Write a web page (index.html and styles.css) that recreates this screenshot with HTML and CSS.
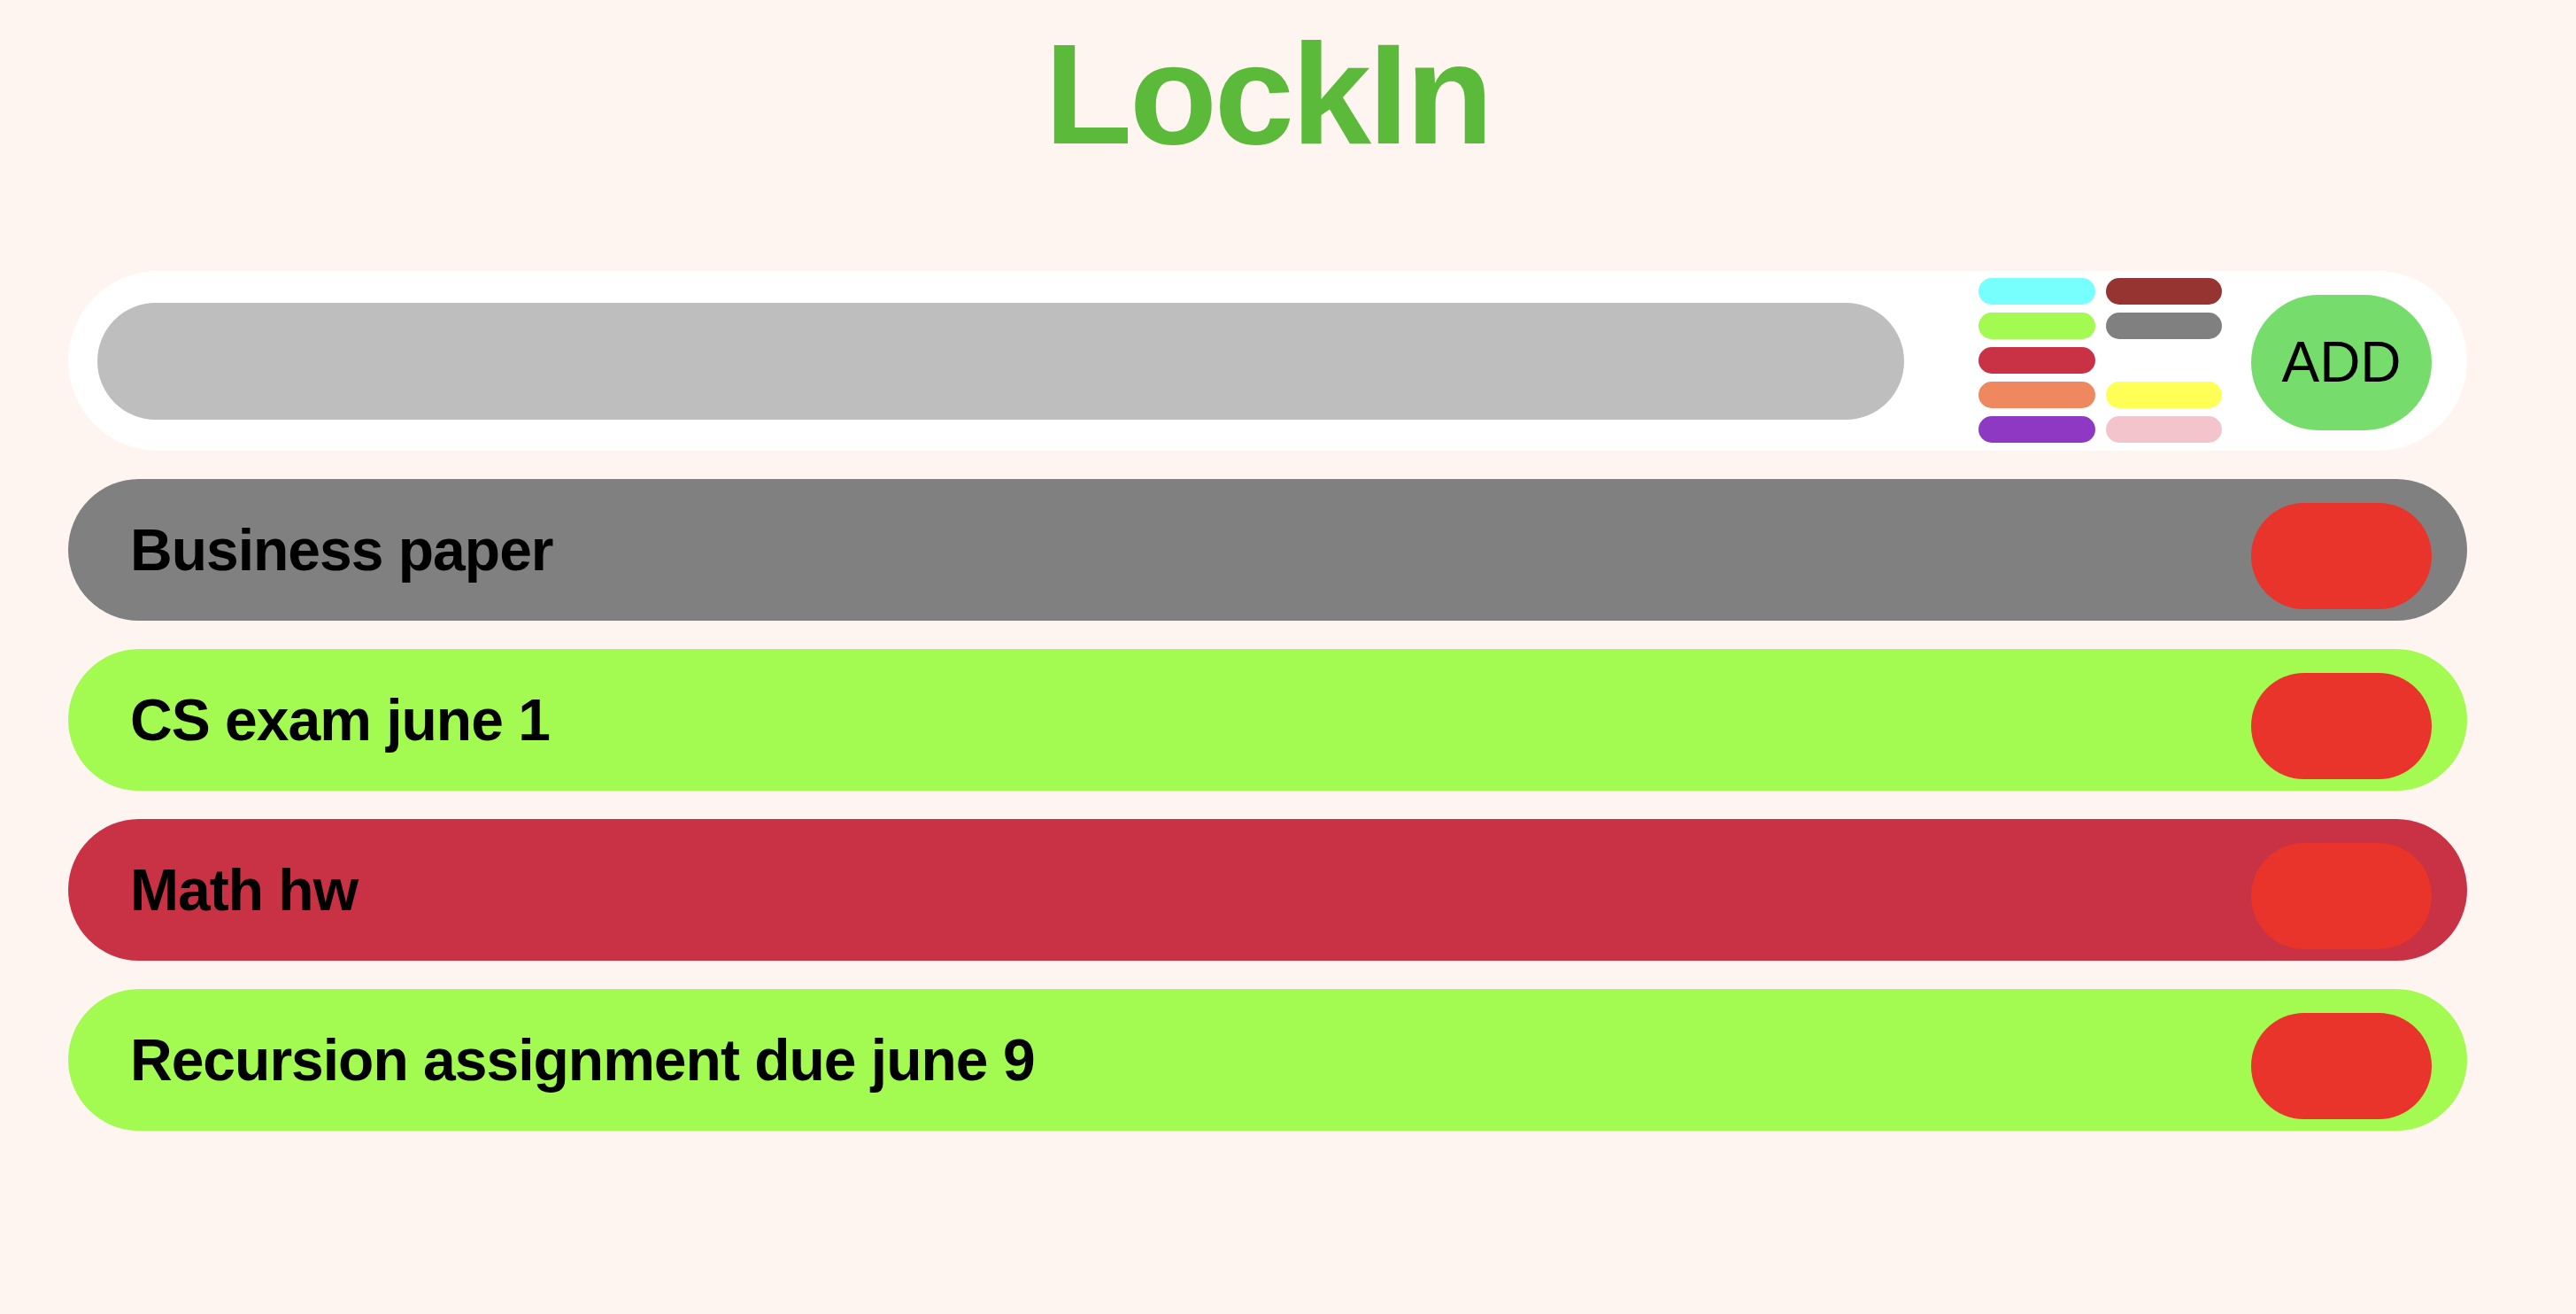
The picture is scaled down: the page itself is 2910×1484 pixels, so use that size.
FILE: index.html
```html
<!DOCTYPE html>
<html>
<head>
<meta charset="utf-8">
<title>LockIn</title>
<link rel="stylesheet" href="styles.css">
</head>
<body>
<div class="app">
  <h1 class="title">LockIn</h1>
  <div class="composer">
    <div class="task-input"></div>
    <div class="palette">
      <span class="swatch c-cyan"></span>
      <span class="swatch c-brown"></span>
      <span class="swatch c-lime"></span>
      <span class="swatch c-gray"></span>
      <span class="swatch c-crimson"></span>
      <span class="swatch c-white"></span>
      <span class="swatch c-orange"></span>
      <span class="swatch c-yellow"></span>
      <span class="swatch c-purple"></span>
      <span class="swatch c-pink"></span>
    </div>
    <button class="add-btn">ADD</button>
  </div>
  <ul class="tasks">
    <li class="task c-gray"><span class="task-text">Business paper</span><button class="del-btn"></button></li>
    <li class="task c-lime"><span class="task-text">CS exam june 1</span><button class="del-btn"></button></li>
    <li class="task c-crimson"><span class="task-text">Math hw</span><button class="del-btn"></button></li>
    <li class="task c-lime"><span class="task-text">Recursion assignment due june 9</span><button class="del-btn"></button></li>
  </ul>
</div>
</body>
</html>
```

FILE: styles.css
```css
html, body {
  margin: 0;
  padding: 0;
  background: #fef5f0;
  font-family: "Liberation Sans", Arial, Helvetica, sans-serif;
}

.app {
  width: 2710px;
  margin-left: 77px;
}

.title {
  margin: 0 0 119px 0;
  padding-top: 25px;
  font-size: 162px;
  line-height: 162px;
  font-weight: bold;
  letter-spacing: -3px;
  color: #5bba3a;
  text-align: center;
}

.composer {
  display: flex;
  align-items: center;
  height: 203px;
  background: #ffffff;
  border-radius: 102px;
  padding-left: 33px;
  padding-right: 40px;
  box-sizing: border-box;
  margin-bottom: 32px;
}

.task-input {
  width: 2041px;
  height: 132px;
  background: #bebebe;
  border-radius: 66px;
  flex-shrink: 0;
}

.palette {
  display: grid;
  grid-template-columns: 132px 131px;
  grid-auto-rows: 30px;
  column-gap: 12px;
  row-gap: 9px;
  margin-left: 84px;
  margin-top: -1px;
}

.swatch {
  display: block;
  border-radius: 15px;
}

.add-btn {
  width: 204px;
  height: 153px;
  margin-left: 33px;
  border: none;
  border-radius: 77px;
  background: #76dd6d;
  color: #000;
  font-family: "Liberation Sans", Arial, Helvetica, sans-serif;
  font-size: 64px;
  padding: 0;
  margin-top: 3px;
}

.tasks {
  list-style: none;
  margin: 0;
  padding: 0;
  display: flex;
  flex-direction: column;
  gap: 32px;
}

.task {
  display: flex;
  align-items: center;
  justify-content: space-between;
  height: 160px;
  border-radius: 80px;
  padding-left: 70px;
  padding-right: 40px;
  box-sizing: border-box;
}

.task-text {
  font-size: 66px;
  font-weight: bold;
  letter-spacing: -1px;
  color: #000;
}

.del-btn {
  width: 204px;
  height: 120px;
  border: none;
  border-radius: 60px;
  background: #e8342a;
  margin-top: 14px;
  padding: 0;
}

.c-cyan { background: #77fffe; }
.c-brown { background: #963431; }
.c-lime { background: #a3fa51; }
.c-gray { background: #808080; }
.c-crimson { background: #c83244; }
.c-white { background: #ffffff; }
.c-orange { background: #ef885e; }
.c-yellow { background: #ffff55; }
.c-purple { background: #8e39c4; }
.c-pink { background: #f4c4cc; }
```
